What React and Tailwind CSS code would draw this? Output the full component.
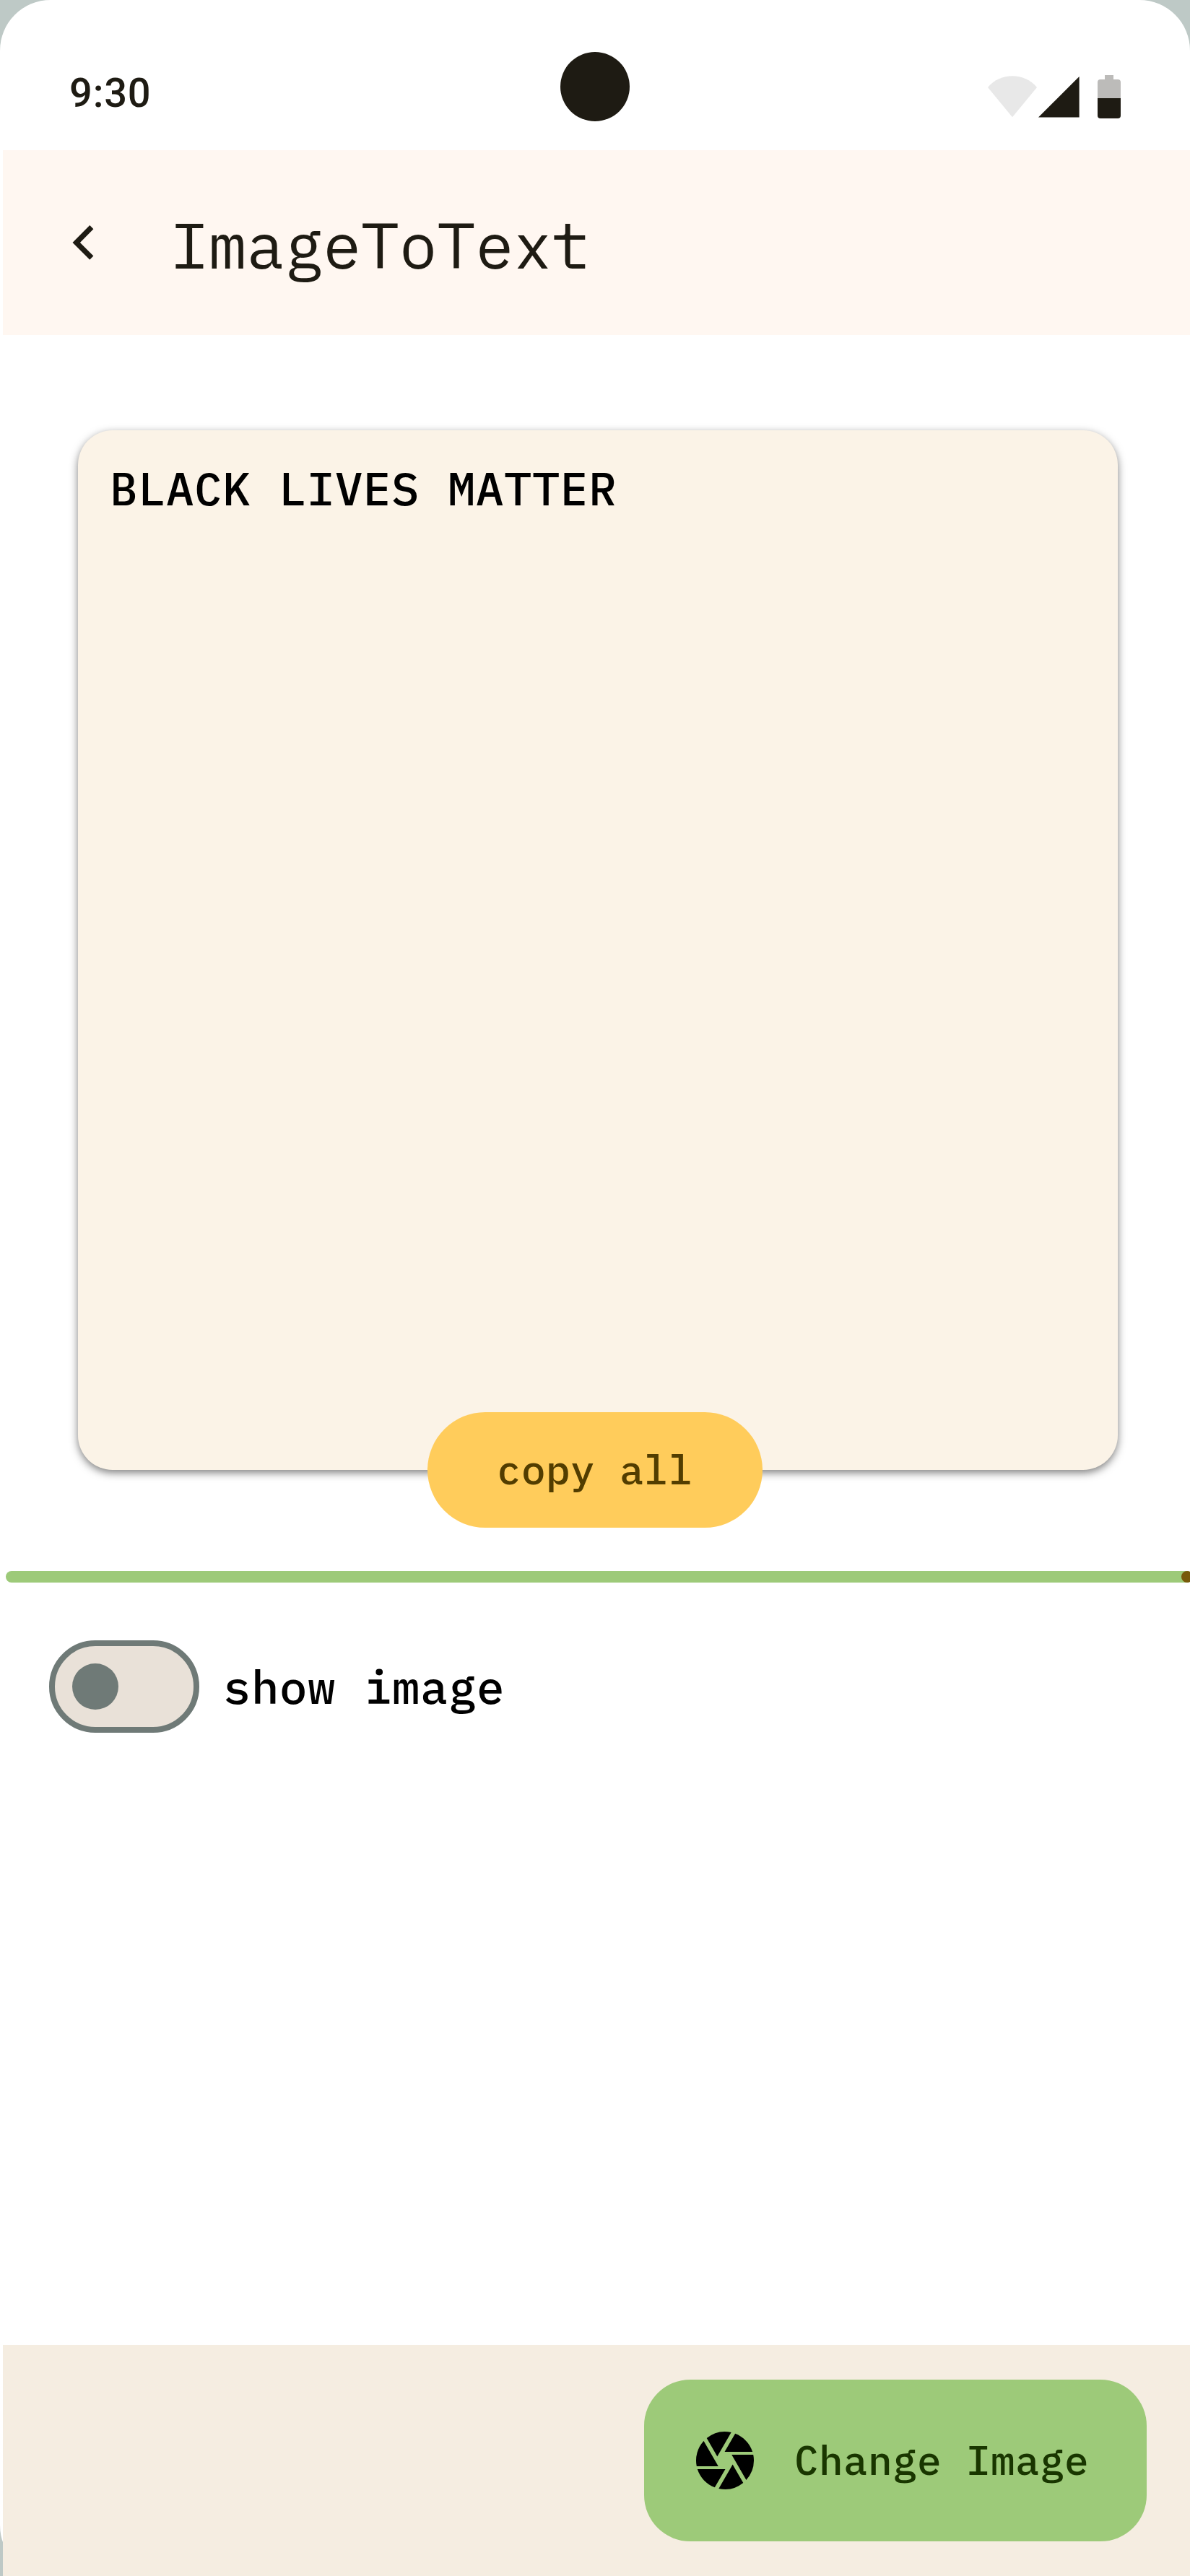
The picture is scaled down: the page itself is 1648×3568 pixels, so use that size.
import { useState } from "react";
import { MdCamera } from "react-icons/md";

const mono = "font-['IBM_Plex_Mono','Liberation_Mono',monospace] whitespace-pre";

function StatusBar() {
  return (
    <header className="relative flex h-[208px] items-center justify-between pt-[46px] pr-24 pl-24">
      <span className="mt-[3px] font-[Roboto,sans-serif] text-[56px] leading-[64px] font-medium tracking-[0.8px] text-[#1e1b13]">
        9:30
      </span>
      <span className="absolute top-[72px] left-[776px] size-24 rounded-full bg-[#1e1b13]" />
      <svg width="184" height="60" viewBox="0 0 184 60" className="mt-[14px]" aria-hidden="true">
        <path d="M0 17C9 6.500 21 1.300 34 1.300S59 6.500 68 17L34 58.200Z" fill="#e8e8e8" />
        <path d="M70 58.600L126.600 2V58.600Z" fill="#1e1b13" />
        <path d="M152 32V10Q152 6 156 6H162V0H174V6H180Q184 6 184 10V32Z" fill="#bcbbb9" />
        <path d="M152 32H184V56Q184 60 180 60H156Q152 60 152 56Z" fill="#1e1b13" />
      </svg>
    </header>
  );
}

function AppBar() {
  return (
    <div className="ml-1 flex h-64 items-center bg-[#fff7f1] pl-24">
      <button aria-label="Back" className="w-[136px]">
        <svg width="30" height="48" viewBox="0 0 30 48" fill="#1e1b13">
          <path d="M24.300 0L29.400 5.200L10.900 24L29.400 42.600L24.300 47.800L0.500 24Z" />
        </svg>
      </button>
      <h1 className={`${mono} pt-1.5 text-[88px] leading-[112px] text-[#1e1b13]`}>ImageToText</h1>
    </div>
  );
}

function Switch({ on, onChange }) {
  return (
    <button
      role="switch"
      aria-checked={on}
      aria-label="show image"
      onClick={() => onChange(!on)}
      className={`flex h-32 w-[208px] items-center rounded-full border-8 border-[#6f7a77] bg-[#e9e1d8] px-6 ${on ? "justify-end" : "justify-start"}`}
    >
      <span className="size-16 rounded-full bg-[#6f7a77]" />
    </button>
  );
}

export default function App() {
  const [showImage, setShowImage] = useState(false);
  return (
    <div className="h-[3568px] w-[1648px] overflow-hidden bg-[#bec9c6]">
      <div className="flex h-full flex-col rounded-t-[70px] rounded-bl-[70px] bg-white">
        <StatusBar />
        <AppBar />

        <main className="flex flex-1 flex-col">
          <section className="relative mt-[132px] ml-[108px] size-[1440px] rounded-[48px] bg-[#fbf3e7] px-11 pt-8 shadow-[0_4px_12px_rgba(0,0,0,0.5)]">
            <p className={`${mono} text-[64px] leading-[96px] font-medium tracking-[0.6px] text-black`}>
              BLACK LIVES MATTER
            </p>
            <button
              className={`${mono} absolute -bottom-20 left-[484px] flex h-40 w-[464px] items-center justify-center rounded-full bg-[#ffcc5b] pb-0.5 text-[56px] leading-[80px] font-medium tracking-[0.4px] text-[#523d00]`}
            >
              copy all
            </button>
          </section>

          <div className="mt-[140px] -mr-1 ml-2 flex h-4 justify-end rounded-full bg-[#9dca79]">
            <span className="size-4 rounded-full bg-[#785a0b]" />
          </div>

          <div className="mt-20 ml-[68px] flex items-center gap-[33px]">
            <Switch on={showImage} onChange={setShowImage} />
            <span className={`${mono} text-[64px] leading-[96px] font-medium tracking-[0.6px] text-black`}>
              show image
            </span>
          </div>
        </main>

        <footer className="ml-1 flex h-80 items-center justify-end bg-[#f5ede1] pr-[60px]">
          <button className="flex h-56 w-[696px] items-center gap-12 rounded-[64px] bg-[#9dca79] pl-16">
            <MdCamera className="size-24 text-black" />
            <span className={`${mono} pb-0.5 text-[56px] leading-[80px] font-medium tracking-[0.4px] text-[#193600]`}>
              Change Image
            </span>
          </button>
        </footer>
      </div>
    </div>
  );
}
